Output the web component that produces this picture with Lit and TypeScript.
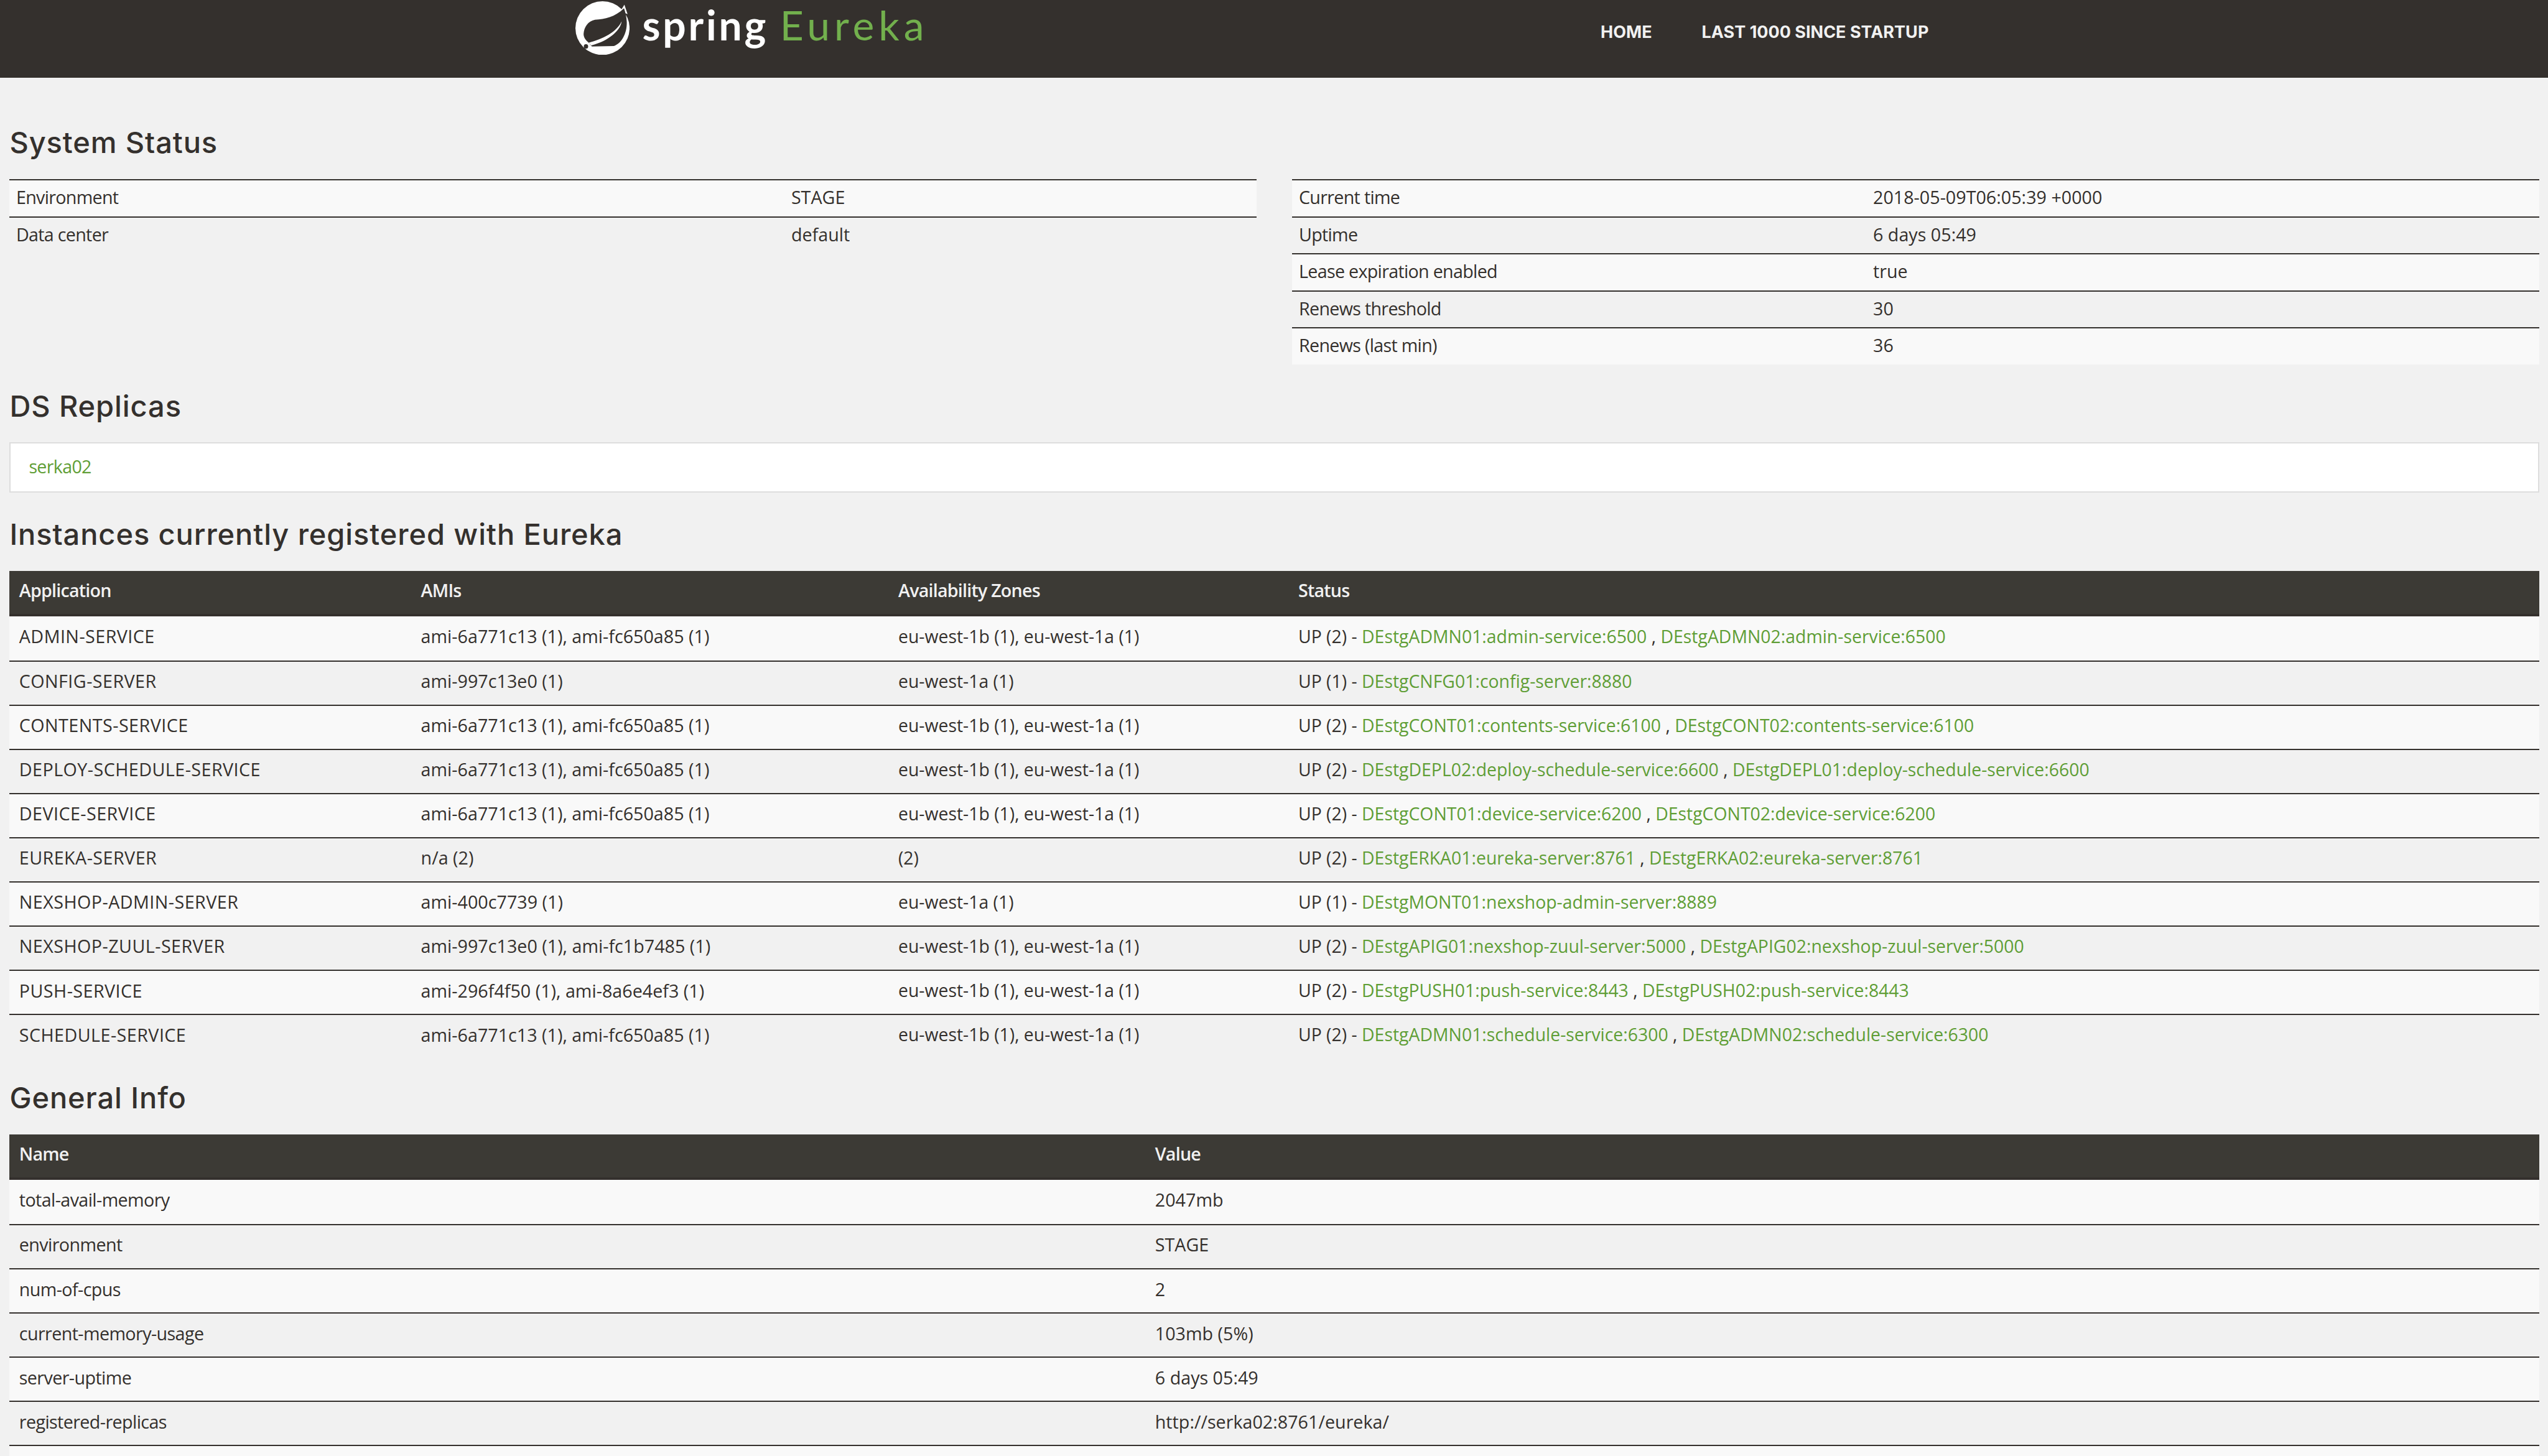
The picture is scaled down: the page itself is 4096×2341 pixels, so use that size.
import {LitElement, css, html} from 'lit';
import {customElement} from 'lit/decorators.js';

const STD = 'ami-6a771c13 (1), ami-fc650a85 (1)';
const ZONES = 'eu-west-1b (1), eu-west-1a (1)';

const APPS = [
  ['ADMIN-SERVICE', STD, ZONES, 2, ['DEstgADMN01:admin-service:6500', 'DEstgADMN02:admin-service:6500']],
  ['CONFIG-SERVER', 'ami-997c13e0 (1)', 'eu-west-1a (1)', 1, ['DEstgCNFG01:config-server:8880']],
  ['CONTENTS-SERVICE', STD, ZONES, 2, ['DEstgCONT01:contents-service:6100', 'DEstgCONT02:contents-service:6100']],
  ['DEPLOY-SCHEDULE-SERVICE', STD, ZONES, 2, ['DEstgDEPL02:deploy-schedule-service:6600', 'DEstgDEPL01:deploy-schedule-service:6600']],
  ['DEVICE-SERVICE', STD, ZONES, 2, ['DEstgCONT01:device-service:6200', 'DEstgCONT02:device-service:6200']],
  ['EUREKA-SERVER', 'n/a (2)', '(2)', 2, ['DEstgERKA01:eureka-server:8761', 'DEstgERKA02:eureka-server:8761']],
  ['NEXSHOP-ADMIN-SERVER', 'ami-400c7739 (1)', 'eu-west-1a (1)', 1, ['DEstgMONT01:nexshop-admin-server:8889']],
  ['NEXSHOP-ZUUL-SERVER', 'ami-997c13e0 (1), ami-fc1b7485 (1)', ZONES, 2, ['DEstgAPIG01:nexshop-zuul-server:5000', 'DEstgAPIG02:nexshop-zuul-server:5000']],
  ['PUSH-SERVICE', 'ami-296f4f50 (1), ami-8a6e4ef3 (1)', ZONES, 2, ['DEstgPUSH01:push-service:8443', 'DEstgPUSH02:push-service:8443']],
  ['SCHEDULE-SERVICE', STD, ZONES, 2, ['DEstgADMN01:schedule-service:6300', 'DEstgADMN02:schedule-service:6300']],
] as const;

const INFO = [
  ['total-avail-memory', '2047mb'],
  ['environment', 'STAGE'],
  ['num-of-cpus', '2'],
  ['current-memory-usage', '103mb (5%)'],
  ['server-uptime', '6 days 05:49'],
  ['registered-replicas', 'http://serka02:8761/eureka/'],
  ['', ''],
];

const ENV = [['Environment', 'STAGE'], ['Data center', 'default']];
const STATS = [
  ['Current time', '2018-05-09T06:05:39 +0000'],
  ['Uptime', '6 days 05:49'],
  ['Lease expiration enabled', 'true'],
  ['Renews threshold', '30'],
  ['Renews (last min)', '36'],
];

@customElement('app-root')
export class AppRoot extends LitElement {
  static styles = css`
    :host {
      display: block;
      height: 100vh;
      overflow: hidden;
      background: #f1f1f1;
      color: #34302d;
      font-family: 'Open Sans', 'Noto Sans', sans-serif;
      font-size: 28.7px;
    }

    .nav {
      display: flex;
      align-items: flex-start;
      height: 125px;
      padding-left: 925px;
      box-sizing: border-box;
      background: #34302d;
    }

    .brand {
      display: flex;
      align-items: flex-start;
      width: 1648px;
    }

    .leaf {
      width: 87.4px;
      height: 86.4px;
      margin-top: 2px;
    }

    .spring,
    .eureka {
      font-family: 'Lato', sans-serif;
      font-size: 66px;
      line-height: 80px;
    }

    .spring {
      margin-left: 20px;
      color: #fff;
      font-weight: 700;
      letter-spacing: 3.8px;
    }

    .eureka {
      margin-left: 18.6px;
      color: #72b04d;
      letter-spacing: 6.9px;
    }

    .links {
      display: flex;
      gap: 80px;
      padding-top: 32px;
      color: #f1f1f1;
      font-family: 'Inter', sans-serif;
      font-weight: 700;
      font-size: 27px;
      line-height: 40px;
    }

    main {
      padding: 0 14px 0 15.4px;
    }

    h2 {
      margin: 36.2px 0 27.6px;
      font-family: 'Inter', sans-serif;
      font-weight: 500;
      font-size: 47px;
      letter-spacing: 0.9px;
      line-height: 62px;
    }

    .system-title {
      margin-top: 73.4px;
    }

    .info-title {
      margin-top: 33.3px;
    }

    .split {
      display: grid;
      grid-template-columns: 1fr 1fr;
      gap: 57.6px;
      align-items: start;
      height: 297.6px;
    }

    table {
      width: 100%;
      table-layout: fixed;
      border-collapse: separate;
      border-spacing: 0;
    }

    td,
    th {
      padding: 0 10.5px 4px;
      text-align: left;
      font-weight: 400;
    }

    .stat tr {
      height: 59.52px;
    }

    .stat td {
      border-top: 2px solid #34302d;
    }

    .stat td:first-child {
      letter-spacing: -0.7px;
    }

    .stat tr:nth-child(odd) td,
    .grid tbody tr:nth-child(odd) td {
      background: #f9f9f9;
    }

    .panel {
      height: 80.6px;
      box-sizing: border-box;
      padding: 0 29px 4px;
      display: flex;
      align-items: center;
      background: #fff;
      border: 2px solid #ddd;
      letter-spacing: -0.7px;
    }

    a {
      color: #5f9e36;
      text-decoration: none;
    }

    .grid th,
    .grid td {
      padding: 0 15.4px 7px;
    }

    .grid thead tr {
      height: 73px;
    }

    .grid th {
      background: #3c3a35;
      border-bottom: 4px solid #34302d;
      color: #f1f1f1;
      font-weight: 600;
      letter-spacing: -0.8px;
    }

    .grid tbody tr {
      height: 71.04px;
    }

    .grid tbody tr + tr td {
      border-top: 2px solid #34302d;
    }

    .apps td:first-child {
      letter-spacing: 0.45px;
    }

    .apps td:nth-child(n + 3) {
      font-size: 28.4px;
    }

    .info td:first-child {
      letter-spacing: -0.6px;
    }
  `;

  private renderStat(rows: string[][], first: number) {
    return html`
      <table class="stat">
        <colgroup><col style="width:${first}px" /><col /></colgroup>
        <tbody>
          ${rows.map(([k, v]) => html`<tr><td>${k}</td><td>${v}</td></tr>`)}
        </tbody>
      </table>
    `;
  }

  render() {
    return html`
      <header class="nav">
        <div class="brand">
          <svg class="leaf" viewBox="42 5 273 270">
            <ellipse cx="178" cy="140" rx="136" ry="135" fill="#fff" />
            <path fill="#fff" d="M268 55L288 22L304 70Z" />
            <path fill="#34302d" d="M286 40C240 85 190 95 140 98C105 105 85 135 83 170C83 185 92 200 105 210L125 232L235 230C270 220 302 170 300 110C299 85 293 60 286 40Z" />
            <path fill="#fff" d="M108 214C180 195 250 160 274 106C270 150 210 205 122 227Z" />
            <circle cx="95" cy="232" r="11" fill="#34302d" />
          </svg>
          <span class="spring">spring</span>
          <span class="eureka">Eureka</span>
        </div>
        <nav class="links"><span>HOME</span><span>LAST 1000 SINCE STARTUP</span></nav>
      </header>
      <main>
        <h2 class="system-title">System Status</h2>
        <div class="split">
          ${this.renderStat(ENV, 1246)}
          ${this.renderStat(STATS, 923)}
        </div>

        <h2>DS Replicas</h2>
        <div class="panel"><a href="#">serka02</a></div>

        <h2>Instances currently registered with Eureka</h2>
        <table class="grid apps">
          <colgroup>
            <col style="width:645.8px" /><col style="width:767.4px" /><col style="width:643px" /><col />
          </colgroup>
          <thead><tr><th>Application</th><th>AMIs</th><th>Availability Zones</th><th>Status</th></tr></thead>
          <tbody>
            ${APPS.map(([name, amis, zones, count, links]) => html`
              <tr>
                <td>${name}</td>
                <td>${amis}</td>
                <td>${zones}</td>
                <td>UP (${count}) - ${links.map((l, i) => html`${i ? ' , ' : ''}<a href="#">${l}</a>`)}</td>
              </tr>
            `)}
          </tbody>
        </table>

        <h2 class="info-title">General Info</h2>
        <table class="grid info">
          <colgroup><col style="width:1826px" /><col /></colgroup>
          <thead><tr><th>Name</th><th>Value</th></tr></thead>
          <tbody>
            ${INFO.map(([k, v]) => html`<tr><td>${k}</td><td>${v}</td></tr>`)}
          </tbody>
        </table>
      </main>
    `;
  }
}
